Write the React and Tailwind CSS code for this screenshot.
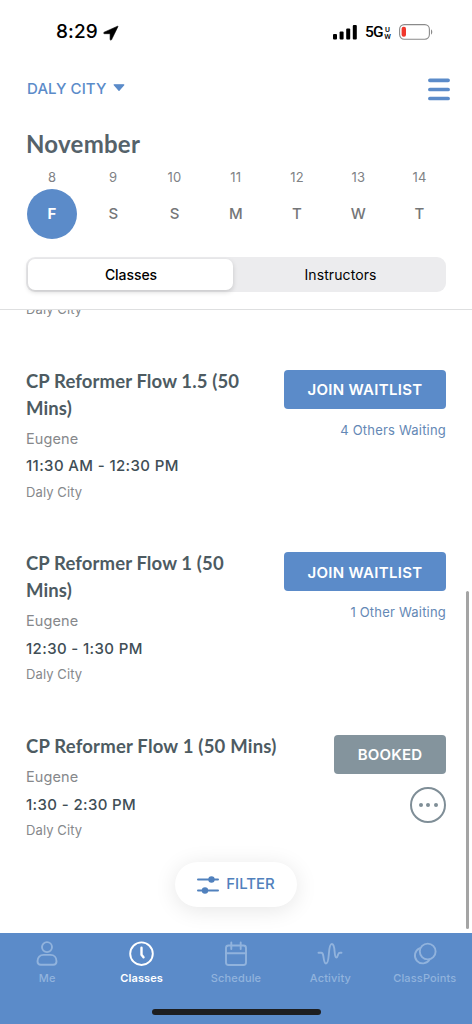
import clsx from "clsx";

const days = [
  { date: 8, day: "F", active: true },
  { date: 9, day: "S" },
  { date: 10, day: "S" },
  { date: 11, day: "M" },
  { date: 12, day: "T" },
  { date: 13, day: "W" },
  { date: 14, day: "T" },
];

const classes = [
  {
    title: "CP Reformer Flow 1.5 (50 Mins)",
    time: "11:30 AM - 12:30 PM",
    waiting: "4 Others Waiting",
  },
  {
    title: "CP Reformer Flow 1 (50 Mins)",
    time: "12:30 - 1:30 PM",
    waiting: "1 Other Waiting",
  },
  {
    title: "CP Reformer Flow 1 (50 Mins)",
    time: "1:30 - 2:30 PM",
    booked: true,
  },
];

function StatusBar() {
  return (
    <div className="flex h-16 items-center justify-between pr-[39px] pl-14 text-black">
      <div className="flex items-center gap-[5px] pt-px">
        <span className="text-[19px] tracking-[0.1px] font-medium">8:29</span>
        <svg width="16" height="16" viewBox="0 0 16 16">
          <path
            d="M14.6 1.2 1.2 7.2c-.9.4-.6 1.5.3 1.5h5.6v5.6c0 .9 1.1 1.2 1.5.3l6.3-12.9c.2-.4 0-.7-.3-.5Z"
            fill="currentColor"
            stroke="currentColor"
            strokeWidth=".6"
          />
        </svg>
      </div>
      <div className="flex items-center">
        <svg width="24" height="16" viewBox="0 0 24 16" fill="currentColor">
          <rect x="0" y="10" width="4" height="5.5" rx="1" />
          <rect x="6.6" y="7.5" width="4" height="8" rx="1" />
          <rect x="13.2" y="4.5" width="4" height="11" rx="1" />
          <rect x="19.8" y="1" width="4" height="14.5" rx="1" />
        </svg>
        <span className="ml-2 w-[18px] pt-px font-[Roboto] text-[15.5px] font-medium tracking-[-0.9px]">5G</span>
        <span className="ml-px flex w-[7px] flex-col items-center pt-px font-[Roboto] text-[7.5px] leading-[7px] font-medium">
          <span>U</span>
          <span>W</span>
        </span>
        <svg className="ml-2" width="34" height="16" viewBox="0 0 34 16">
          <rect x=".6" y=".6" width="29.8" height="14.6" rx="4.6" fill="none" stroke="#8a8a8a" strokeWidth="1.1" />
          <rect x="2.6" y="2.8" width="4.4" height="10" rx="2" fill="#f0372c" />
          <path d="M32 5.5c1.7.6 1.7 4.4 0 5Z" fill="#8a8a8a" />
        </svg>
      </div>
    </div>
  );
}

function Header() {
  return (
    <header className="h-[310px] shrink-0 border-b-[1.5px] border-[#dedfe0]">
      <StatusBar />
      <div className="flex h-[50px] items-center justify-between pr-[22px] pl-[27px] text-[#5b8bc9]">
        <button className="flex items-center gap-[6px] pt-px">
          <span className="text-[15px] font-medium tracking-[0.1px]">DALY CITY</span>
          <svg className="-mt-[3px]" width="12" height="8" viewBox="0 0 12 8">
            <path d="M1.2.8h9.6L6 6.4Z" fill="currentColor" stroke="currentColor" strokeWidth="1.2" strokeLinejoin="round" />
          </svg>
        </button>
        <svg width="22" height="23" viewBox="0 0 22 23" stroke="currentColor" strokeWidth="3.7" strokeLinecap="round">
          <path d="M1.9 2.3h18.2M1.9 11.5h18.2M1.9 20.5h18.2" />
        </svg>
      </div>
      <h1 className="mt-[15px] pl-[26px] font-[Lato] text-[24px] leading-[30px] font-bold tracking-[0.25px] text-[#55626a]">
        November
      </h1>
      <div className="mt-[8px] flex justify-between pr-[1px] pl-[27px]">
        {days.map((d) => (
          <div key={d.date} className="flex w-[50px] shrink-0 flex-col items-center not-last:mr-[11.25px] last:mr-auto">
            <span className="text-[13px] leading-5 tracking-[0.2px] text-[#808285]">{d.date}</span>
            <span
              className={clsx(
                "mt-[2px] flex size-[50px] items-center justify-center rounded-full text-[15px]",
                d.active ? "bg-[#5b8bc9] font-bold text-white" : "font-medium text-[#747678]"
              )}
            >
              {d.day}
            </span>
          </div>
        ))}
      </div>
      <div className="mx-[26px] mt-[18px] flex h-[35px] rounded-[9px] bg-[#ececee] p-[2px] text-[14px] tracking-[0.1px] text-black">
        <button className="w-[205px] rounded-[7px] bg-white pl-px font-medium tracking-[-0.05px] shadow-[0_2px_5px_rgba(0,0,0,0.16)]">
          Classes
        </button>
        <button className="flex-1 pl-1">Instructors</button>
      </div>
    </header>
  );
}

function ClassCard({ item }) {
  return (
    <div className="mt-[46.7px] flex items-start justify-between pr-[26px] pl-[26px]">
      <div className="w-[251px] shrink-0">
        <h2
          className={clsx(
            "font-[Lato] text-[18.5px] leading-[27px] font-bold text-[#4d5b62]",
            item.booked ? "tracking-[0.2px] whitespace-nowrap" : "w-[225px] tracking-[0.12px]"
          )}
        >
          {item.title}
        </h2>
        <p className="mt-[4px] text-[14.5px] leading-[26px] tracking-[0.1px] text-[#86888b]">Eugene</p>
        <p className="mt-[0.5px] text-[15px] leading-[27px] font-medium tracking-[0.37px] text-[#414e56]">
          {item.time}
        </p>
        <p className="mt-[0.5px] text-[13px] leading-6 tracking-[0.1px] text-[#86888b]">Daly City</p>
      </div>
      <div className="mt-[2px] flex shrink-0 flex-col items-end">
        {item.booked ? (
          <>
            <button className="h-[39px] w-[112px] rounded bg-[#84949d] pt-[2px] text-[15px] font-semibold tracking-[0.2px] text-white">
              BOOKED
            </button>
            <button className="mt-[13px] flex size-[36px] items-center justify-center gap-[3.5px] rounded-full border-2 border-[#7f8e97]">
              <span className="size-1 rounded-full bg-[#7f8e97]" />
              <span className="size-1 rounded-full bg-[#7f8e97]" />
              <span className="size-1 rounded-full bg-[#7f8e97]" />
            </button>
          </>
        ) : (
          <>
            <button className="h-[39px] w-[162px] rounded bg-[#5b8bc9] pt-[2px] text-[15px] font-semibold tracking-[0.3px] text-white">
              JOIN WAITLIST
            </button>
            <p className="mt-[11px] text-[13px] leading-5 tracking-[0.2px] text-[#6488b5]">{item.waiting}</p>
          </>
        )}
      </div>
    </div>
  );
}

const tabs = [
  {
    label: "Me",
    icon: (
      <>
        <circle cx="13" cy="6.6" r="5" />
        <path d="M9.5 14.4h7c3.5 0 6 2.5 6 6.3 0 2.2-1.3 3.5-3.3 3.5H6.8c-2 0-3.3-1.3-3.3-3.500 0-3.800 2.500-6.300 6-6.300Z" />
      </>
    ),
  },
  {
    label: "Classes",
    active: true,
    icon: (
      <>
        <circle cx="12.5" cy="13.2" r="11.3" />
        <path d="M12.5 7.2v7l2 2.5" strokeWidth="2.4" />
      </>
    ),
  },
  {
    label: "Schedule",
    icon: (
      <>
        <rect x="3" y="5" width="20" height="19.5" rx="2.5" />
        <path d="M3 12.8h20M8.3 2v6.5M17.700 2v6.500" />
      </>
    ),
  },
  {
    label: "Activity",
    icon: (
      <path d="M1.5 12.300h2.700c1.500 0 1.900 1.200 2.200 3.500.5 4 .9 7.200 2.600 7.200s2.300-2.500 2.800-9c.5-7.500 1.200-10.500 3-10.500s2.500 3 2.800 7.500c.3 4 .6 6 1.700 6s1.300-1.600 1.800-3c.4-1.100 1-1.700 2-1.700h1.400" />
    ),
  },
  {
    label: "ClassPoints",
    icon: (
      <>
        <circle cx="15.700" cy="11" r="7.900" />
        <path d="M7.500 7.800A7.900 7.900 0 1 0 17.600 19" />
      </>
    ),
  },
];

function TabBar() {
  return (
    <nav className="h-[91px] shrink-0 bg-[#5b8bc9] pt-[7px]">
      <div className="flex">
        {tabs.map((tab) => (
          <button
            key={tab.label}
            className={clsx("flex flex-1 basis-0 flex-col items-center", tab.active ? "text-white" : "text-[#91b3dd]")}
          >
            <svg
              width="28"
              height="28"
              viewBox="-1 -0.5 28 28"
              fill="none"
              stroke="currentColor"
              strokeWidth="1.9"
              strokeLinecap="round"
              strokeLinejoin="round"
            >
              {tab.icon}
            </svg>
            <span
              className={clsx("mt-[2px] text-[11px] leading-4", tab.active ? "font-semibold tracking-[0.1px]" : "font-medium tracking-[0.15px]")}
            >
              {tab.label}
            </span>
          </button>
        ))}
      </div>
      <div className="mx-auto mt-[23px] h-[6px] w-[169px] rounded-full bg-[#1d1e20]" />
    </nav>
  );
}

export default function App() {
  return (
    <div className="flex h-[1024px] w-[472px] flex-col overflow-hidden bg-white font-[Inter,sans-serif]">
      <Header />
      <main className="relative min-h-0 flex-1 overflow-hidden">
        <p className="-mt-[13px] pl-[26px] text-[13px] leading-6 tracking-[0.1px] text-[#86888b]">Daly City</p>
        {classes.map((item, i) => (
          <ClassCard key={i} item={item} />
        ))}
        <button className="absolute bottom-[26px] left-[175px] flex h-[45px] w-[122px] items-center justify-center gap-[7px] rounded-full bg-white text-[#5181bd] shadow-[0_3px_22px_rgba(0,0,0,0.1)]">
          <svg width="22" height="20" viewBox="0 0 22 20" stroke="currentColor" strokeWidth="2" strokeLinecap="round">
            <path d="M1 4.5h20M1 15.5h20" />
            <circle cx="14.5" cy="4.5" r="2.2" fill="currentColor" />
            <circle cx="8" cy="15.5" r="2.2" fill="currentColor" />
          </svg>
          <span className="text-[15px] font-medium">FILTER</span>
        </button>
        <div className="absolute right-[3px] bottom-[4px] h-[338px] w-[3px] rounded-full bg-[#a4a4a4]" />
      </main>
      <TabBar />
    </div>
  );
}
